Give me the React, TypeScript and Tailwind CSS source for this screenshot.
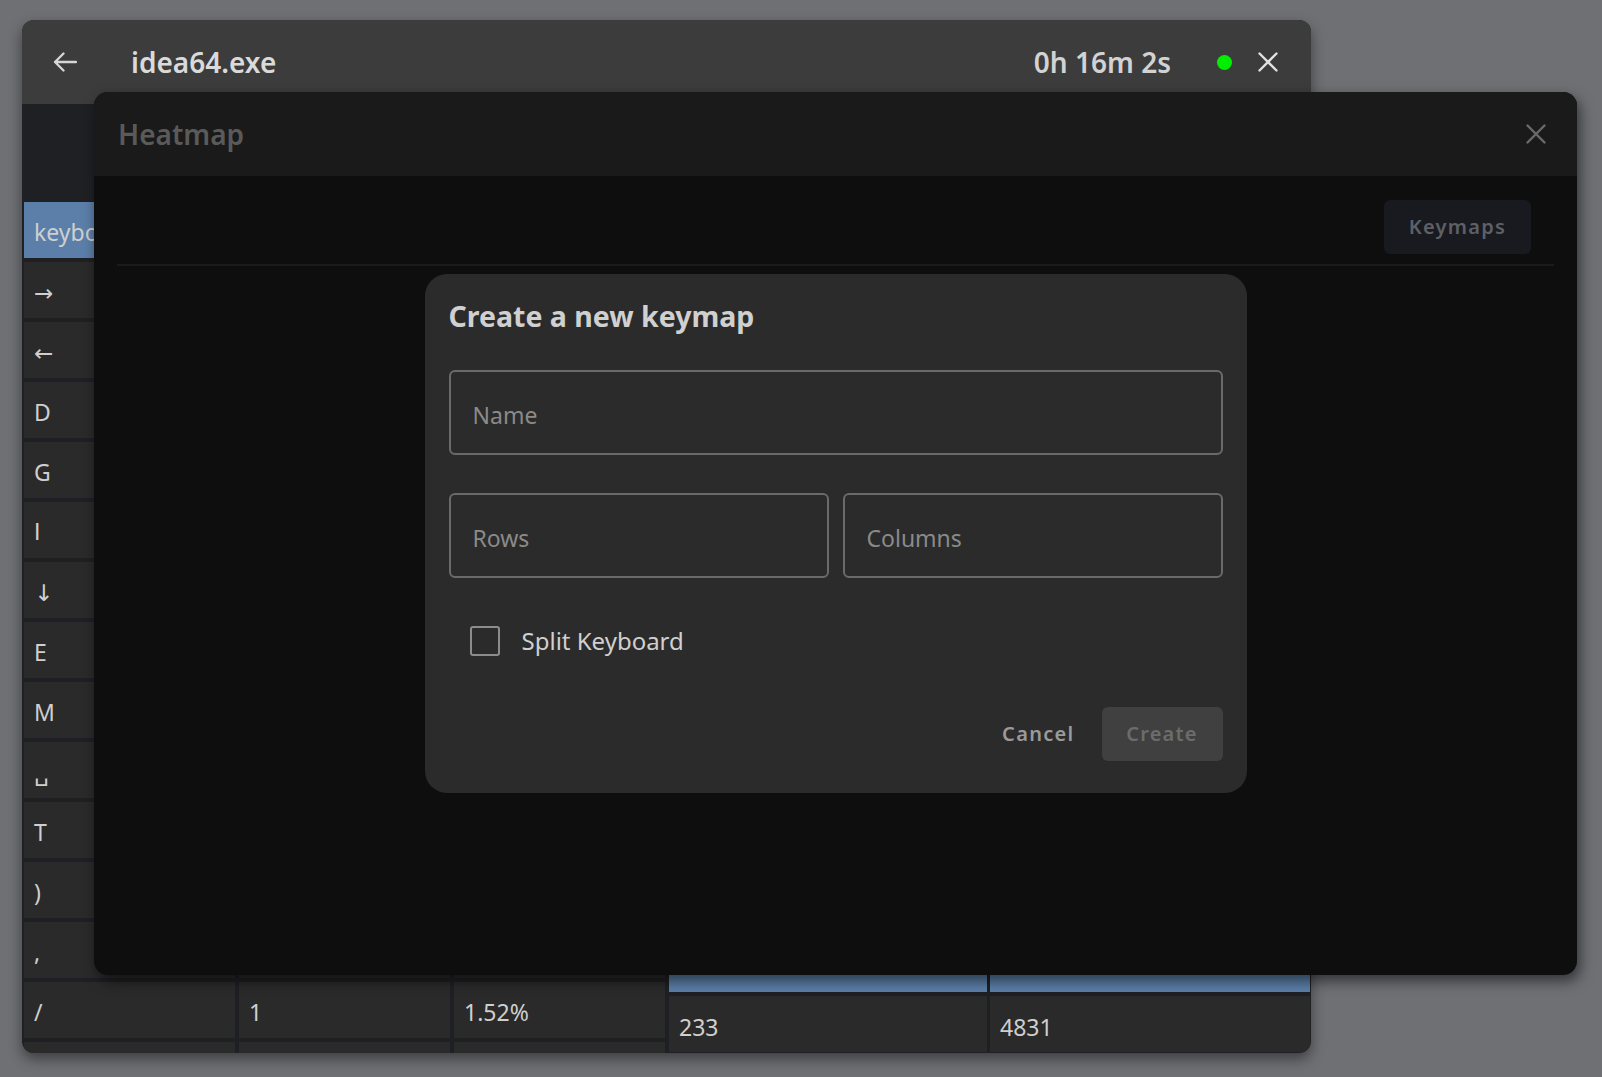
import React from "react"

const font = { fontFamily: '"Noto Sans", "DejaVu Sans", sans-serif' }

const rows = [
  { key: "→", count: "1204", pct: "18.20%" },
  { key: "←", count: "981", pct: "14.83%" },
  { key: "D", count: "402", pct: "6.08%" },
  { key: "G", count: "311", pct: "4.70%" },
  { key: "I", count: "287", pct: "4.34%" },
  { key: "↓", count: "250", pct: "3.78%" },
  { key: "E", count: "198", pct: "2.99%" },
  { key: "M", count: "176", pct: "2.66%" },
  { key: "␣", count: "154", pct: "2.33%" },
  { key: "T", count: "133", pct: "2.01%" },
  { key: ")", count: "120", pct: "1.81%" },
  { key: ",", count: "108", pct: "1.63%" },
  { key: "/", count: "1", pct: "1.52%" },
  { key: "", count: "", pct: "" },
]

const Cross = ({ color, size = 20 }: { color: string; size?: number }) => (
  <svg width={size} height={size} viewBox="0 0 20 20" fill="none">
    <path d="M1.5 1.5 18.5 18.5M18.5 1.5 1.5 18.5" stroke={color} strokeWidth="2.4" strokeLinecap="round" />
  </svg>
)

const Cell = ({ children, blue }: { children?: React.ReactNode; blue?: boolean }) => (
  <div
    className={
      "h-[56px] flex items-center pl-[10px] pt-[4px] text-[23px] text-[#cfcfcf] whitespace-nowrap overflow-hidden " +
      (blue ? "bg-[#5c7fa9]" : "bg-[#2a2a2a]")
    }
  >
    {children}
  </div>
)

const MainWindow = () => (
  <div className="w-[1289px] h-[1033px] rounded-xl overflow-hidden flex flex-col bg-[#1f2024] shadow-[0_6px_14px_rgba(0,0,0,0.45)]">
    <div className="h-[84px] shrink-0 bg-[#3c3c3c] flex items-center pl-[31px] pr-[33px]">
      <svg width="24" height="20" viewBox="0 0 24 20" fill="none">
        <path d="M23 10H2M10.5 1.5 2 10l8.5 8.5" stroke="#d6d6d6" strokeWidth="2.3" strokeLinecap="round" strokeLinejoin="round" />
      </svg>
      <div className="ml-[54px] text-[28px] font-semibold text-[#dadada] leading-none">idea64.exe</div>
      <div className="ml-auto text-[28px] font-semibold text-[#d2d2d2] leading-none">0h 16m 2s</div>
      <div className="ml-[46px] w-[15px] h-[15px] rounded-full bg-[#00ee00]" />
      <div className="ml-[26px]">
        <Cross color="#e2e2e2" />
      </div>
    </div>
    <div className="flex-1 pt-[98px] pl-[2px] flex gap-[4px]">
      <div className="grid grid-cols-[211px_211px_211px] gap-[4px] content-start">
        <Cell blue>keyboard</Cell>
        <Cell blue>count</Cell>
        <Cell blue>share</Cell>
        {rows.map((r, i) => (
          <React.Fragment key={i}>
            <Cell>
              {r.key === "I" ? <span style={{ fontFamily: '"Liberation Sans", sans-serif' }}>I</span> : r.key}
            </Cell>
            <Cell>{r.count}</Cell>
            <Cell>{r.pct}</Cell>
          </React.Fragment>
        ))}
      </div>
      <div className="w-[318px] flex flex-col gap-[4px] pt-[734px]">
        <div className="h-[56px] bg-[#5c7fa9]" />
        <div className="h-[56px] bg-[#2a2a2a] flex items-center pl-[10px] pt-[6px] text-[23px] text-[#cfcfcf]">233</div>
      </div>
      <div className="w-[320px] -ml-[1px] flex flex-col gap-[4px] pt-[734px]">
        <div className="h-[56px] bg-[#5c7fa9]" />
        <div className="h-[56px] bg-[#2a2a2a] flex items-center pl-[10px] pt-[6px] text-[23px] text-[#cfcfcf]">4831</div>
      </div>
    </div>
  </div>
)

const Field = ({ label, className }: { label: string; className?: string }) => (
  <input
    readOnly
    placeholder={label}
    className={
      "h-[85px] rounded-[6px] border-2 border-[#6a6a6a] bg-transparent pl-[22px] pt-[5px] text-[23px] text-[#cfcfcf] placeholder:text-[#8a8a8a] outline-none " +
      (className ?? "")
    }
    style={font}
  />
)

const CreateDialog = () => (
  <div className="w-[822px] h-[519px] rounded-[22px] bg-[#2b2b2b] px-[24px] pt-[24px] flex flex-col">
    <div className="text-[28.5px] font-bold leading-[36px] text-[#d0d0d0]">Create a new keymap</div>
    <Field label="Name" className="mt-[36px] w-full" />
    <div className="mt-[38px] flex gap-[14px]">
      <Field label="Rows" className="w-[380px]" />
      <Field label="Columns" className="w-[380px]" />
    </div>
    <div className="mt-[48px] flex items-center pl-[21px]">
      <div className="w-[30px] h-[30px] rounded-[3px] border-2 border-[#8c8c8c]" />
      <div className="ml-[22px] text-[24px] text-[#d0d0d0] leading-none">Split Keyboard</div>
    </div>
    <div className="mt-[51px] flex justify-end items-center gap-[11px]">
      <button className="h-[54px] px-[16px] text-[20px] font-semibold tracking-[1.3px] text-[#9a9a9a]" style={font}>
        Cancel
      </button>
      <button className="w-[121px] h-[54px] rounded-[6px] bg-[#404040] text-[20px] font-semibold tracking-[1.2px] text-[#6c6c6c]" style={font}>
        Create
      </button>
    </div>
  </div>
)

const HeatmapModal = () => (
  <div className="absolute left-[94px] top-[92px] w-[1483px] h-[883px] rounded-[14px] overflow-hidden bg-[#0e0e0e] flex flex-col shadow-[3px_6px_14px_rgba(0,0,0,0.55)]">
    <div className="h-[84px] shrink-0 bg-[#1a1a1a] flex items-center pl-[24px] pr-[31px]">
      <div className="text-[28px] font-semibold text-[#5a5a5a] leading-none">Heatmap</div>
      <div className="ml-auto">
        <Cross color="#6a6a6a" />
      </div>
    </div>
    <div className="px-[23px] pt-[24px]">
      <div className="flex justify-end pr-[23px]">
        <div className="w-[147px] h-[54px] rounded-[6px] bg-[#181a20] flex items-center justify-center text-[20px] font-semibold tracking-[1.3px] text-[#5e6065]">
          Keymaps
        </div>
      </div>
      <div className="mt-[10px] h-[2px] bg-[#1b1b1b]" />
    </div>
    <div className="absolute inset-0 flex items-center justify-center">
      <CreateDialog />
    </div>
  </div>
)

export default function App() {
  return (
    <div className="relative w-[1602px] h-[1077px] overflow-hidden bg-[#6f7074] pl-[22px] pt-[20px]" style={font}>
      <MainWindow />
      <HeatmapModal />
    </div>
  )
}
